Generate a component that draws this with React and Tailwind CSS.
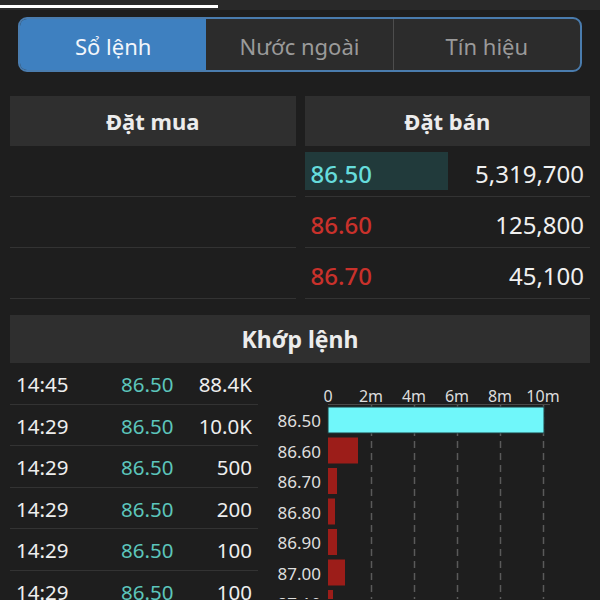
const asks = [
  { price: "86.50", vol: "5,319,700", color: "text-[#66dcdc]", hl: true },
  { price: "86.60", vol: "125,800", color: "text-[#c9312b]" },
  { price: "86.70", vol: "45,100", color: "text-[#c9312b]" },
];

const trades = [
  ["14:45", "86.50", "88.4K"],
  ["14:29", "86.50", "10.0K"],
  ["14:29", "86.50", "500"],
  ["14:29", "86.50", "200"],
  ["14:29", "86.50", "100"],
  ["14:29", "86.50", "100"],
];

const ticks = [
  [328, "0"],
  [371, "2m"],
  [414, "4m"],
  [457, "6m"],
  [500, "8m"],
  [543, "10m"],
];

const bars = [
  ["86.50", 216],
  ["86.60", 30],
  ["86.70", 9],
  ["86.80", 7],
  ["86.90", 9],
  ["87.00", 17],
  ["87.10", 5],
];

function Chart() {
  // coords are page coords shifted by the chart origin (258, 364)
  const ox = 258;
  const oy = 364;
  return (
    <svg width="332" height="236" className="block" style={{ fontFamily: "'Noto Sans', sans-serif" }}>
      <g transform={`translate(${-ox} ${-oy})`}>
        {ticks.map(([x, t]) => (
          <text key={t} x={x} y={403} fontSize="16" fill="#dcdcdc" textAnchor="middle">
            {t}
          </text>
        ))}
        <line x1={328} y1={405.5} x2={550} y2={405.5} stroke="#4a4a4a" strokeWidth="1" />
        {ticks.slice(1).map(([x]) => (
          <line key={x} x1={x + 0.5} y1={406} x2={x + 0.5} y2={600} stroke="#5a5a5a" strokeWidth="1.5" strokeDasharray="7 5" />
        ))}
        {bars.map(([label, w], i) => {
          const y = 408 + i * 30.5;
          const first = i === 0;
          return (
            <g key={label}>
              <text x={321} y={y + 20} fontSize="17" fill="#dedede" textAnchor="end">
                {label}
              </text>
              <rect
                x={328}
                y={y}
                width={w}
                height={26}
                fill={first ? "#70f7fa" : "#9c1d19"}
                stroke={first ? "#1d3d3e" : "none"}
                strokeWidth="1"
              />
            </g>
          );
        })}
      </g>
    </svg>
  );
}

export default function App() {
  return (
    <div
      className="w-[600px] h-[600px] overflow-hidden bg-[#1e1e1e] text-[#ececec]"
      style={{ fontFamily: "'Noto Sans', 'Open Sans', sans-serif" }}
    >
      <div className="h-[10px] bg-[#292929] pt-[5px]">
        <div className="w-[218px] h-[3px] bg-white" />
      </div>

      <div className="mx-[18px] mt-[7px] h-[55px] flex rounded-[9px] border-2 border-[#4a7cae] overflow-hidden bg-[#2c2c2c] text-[22px]">
        <div className="flex-1 flex items-center justify-center pt-[3px] bg-[#3e80c0] text-[#f2f6fb]">Sổ lệnh</div>
        <div className="flex-1 flex items-center justify-center pt-[3px] text-[#9a9a9a]">Nước ngoài</div>
        <div className="flex-1 flex items-center justify-center pt-[3px] text-[#9a9a9a] border-l border-[#4d4d4d]">Tín hiệu</div>
      </div>

      <div className="mt-[24px] px-[10px] grid grid-cols-2 gap-[9px]">
        <div>
          <div className="h-[50px] bg-[#2f2f2f] flex items-center justify-center font-bold text-[22px]">Đặt mua</div>
          {asks.map((a, i) => (
            <div key={i} className="h-[51px] border-b border-[#333]" />
          ))}
        </div>
        <div>
          <div className="h-[50px] bg-[#2f2f2f] flex items-center justify-center font-bold text-[22px]">Đặt bán</div>
          {asks.map((a, i) => (
            <div key={i} className="h-[51px] border-b border-[#333] flex items-center">
              <div
                className={`w-[143px] h-[38px] flex items-center pl-[6px] pt-[5px] text-[24px] font-medium ${a.color} ${
                  a.hl ? "bg-[#213a3b]" : ""
                }`}
              >
                {a.price}
              </div>
              <div className="flex-1 text-right pr-[6px] pt-[5px] text-[24px] text-[#f0f0f0]">{a.vol}</div>
            </div>
          ))}
        </div>
      </div>

      <div className="mx-[10px] mt-[16px] h-[48px] bg-[#2f2f2f] flex items-center justify-center font-bold text-[23px]">
        Khớp lệnh
      </div>

      <div className="flex">
        <div className="ml-[10px] w-[248px]">
          {trades.map(([t, p, v], i) => (
            <div key={i} className="h-[41.5px] border-b border-[#333] flex items-center px-[6px] pt-[3px] text-[20.5px]">
              <div className="w-[105px] text-[#eeeeee]">{t}</div>
              <div className="w-[62px] text-[#5cc5bb]">{p}</div>
              <div className="flex-1 text-right text-[#eeeeee]">{v}</div>
            </div>
          ))}
        </div>
        <Chart />
      </div>
    </div>
  );
}
